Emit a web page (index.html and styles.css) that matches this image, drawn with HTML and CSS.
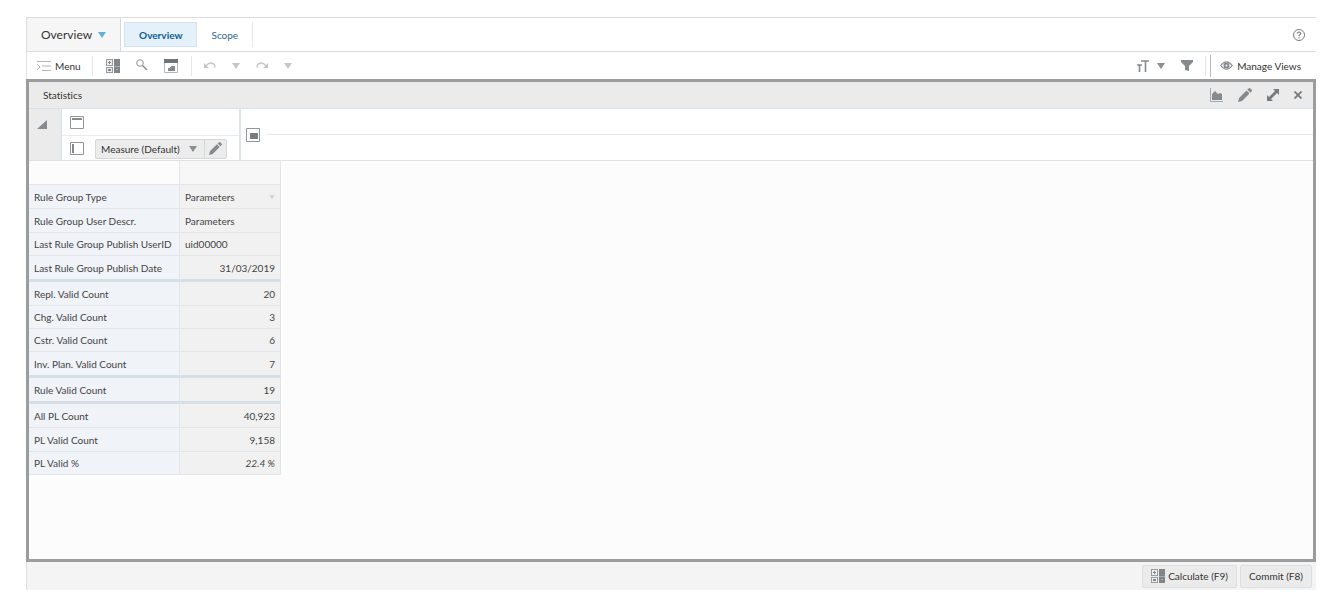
FILE: index.html
```html
<!DOCTYPE html>
<html lang="en">
<head>
<meta charset="utf-8">
<title>Overview</title>
<link rel="stylesheet" href="styles.css">
</head>
<body>
<svg class="defs" aria-hidden="true">
  <symbol id="calc" viewBox="0 0 14 14"><path fill="#969b9f" d="M0 0h7v7H0zM0 8h7v6H0z"/><path fill="#eee" d="M1 1h5v5H1zM1 9h5v4H1z"/><path fill="#7f8589" d="M3 2h1v1h1v1H4v1H3V4H2V3h1zM2 10h3v2H2zM8 0h6v14H8z"/><path fill="#a9adb0" d="M8 7h6v1H8zM10 10h2v1h-2z"/></symbol>
  <symbol id="pencil" viewBox="0 0 14 14"><path fill="#858a8e" d="M0 14l1-4 7.500-7.500 3 3L4 13zM9.300 1.700L10.500.5q1-1 2 0l1 1q1 1 0 2l-1.200 1.200z"/></symbol>
  <symbol id="down" viewBox="0 0 8 6"><path fill="currentColor" d="M0 0h8L4 6z"/></symbol>
  <symbol id="undo" viewBox="0 0 12 8"><path fill="none" stroke="currentColor" stroke-width="1.500" d="M2 3.500q4-3.500 7-2 2 1 2 4"/><path fill="currentColor" d="M0 1v5h5z"/></symbol>
</svg>
<main class="app">
  <header class="tabs">
    <button class="workbook">Overview <svg class="caret"><use href="#down"/></svg></button>
    <nav class="tablist"><a class="tab active" href="#overview">Overview</a><a class="tab" href="#scope">Scope</a></nav>
    <button class="help" aria-label="Help"><svg width="12" height="12" viewBox="0 0 12 12" fill="none" stroke="#777b7f"><circle cx="6" cy="6" r="5.500"/><path stroke-width="1.200" d="M4.300 4.700Q4.400 3 6 3t1.700 1.500Q7.600 5.500 6 6.200v1M6 8.200v1.200"/></svg></button>
  </header>
  <div class="toolbar">
    <button class="menu"><svg width="14" height="12" viewBox="0 0 14 12" fill="none" stroke="#b3b7ba"><path d="M0 1.500h14M5 6h9M5 10.500h9M0 4l3 3-3 3"/></svg>Menu</button>
    <div class="group tools">
      <button aria-label="Calculate"><svg width="14" height="14"><use href="#calc"/></svg></button>
      <button class="find" aria-label="Find"><svg width="12" height="12" viewBox="0 0 12 12" fill="none" stroke="#8c9195"><circle cx="4" cy="4" r="3.300"/><path stroke-width="1.600" d="M6.500 6.500l4.500 4.500"/></svg></button>
      <button aria-label="Window"><svg width="14" height="14" viewBox="0 0 14 14"><path fill="#fff" stroke="#b3b6b9" d="M.5.5h13v13H.5z"/><path fill="#6f7478" d="M0 0h14v4H0z"/><path fill="#858a8e" d="M4 12V9h2V8h1V7h4v5z"/></svg></button>
    </div>
    <div class="group history">
      <button aria-label="Undo"><svg width="12" height="8"><use href="#undo"/></svg></button>
      <button aria-label="Undo list"><svg class="caret"><use href="#down"/></svg></button>
      <button aria-label="Redo"><svg class="flip" width="12" height="8"><use href="#undo"/></svg></button>
      <button aria-label="Redo list"><svg class="caret"><use href="#down"/></svg></button>
    </div>
    <div class="right">
      <button class="text-size" aria-label="Text size"><svg width="12" height="12" viewBox="0 0 12 12" fill="none" stroke="#858a8e" stroke-width="1.600"><path d="M4 1h8M8.500 1v11M0 5h5M2.500 5v7"/></svg><svg class="caret"><use href="#down"/></svg></button>
      <button aria-label="Filter"><svg width="12" height="11" viewBox="0 0 12 11"><path fill="#858a8e" d="M0 0h12v2L8 6v5l-4-1V6L0 2z"/></svg></button>
      <div class="group manage"><button class="views"><svg width="13" height="9" viewBox="0 0 13 9" fill="none" stroke="#858a8e" stroke-width="1.200"><path d="M.7 4.500Q6.500-3 12.300 4.500 6.500 12 .7 4.500z"/><circle cx="6.500" cy="4.500" r="2" stroke-width="2"/></svg>Manage Views</button></div>
    </div>
  </div>
  <section class="panel">
    <header class="panel-head">
      <h1>Statistics</h1>
      <button aria-label="Chart"><svg width="13" height="14" viewBox="0 0 13 14"><path fill="none" stroke="#a3a8ac" d="M.5 0v13.500H13"/><path fill="#858a8e" d="M2 12V6l3-3 3 3 2-1 2 1v6z"/></svg></button>
      <button aria-label="Edit"><svg width="14" height="14"><use href="#pencil"/></svg></button>
      <button aria-label="Maximize"><svg width="12" height="12" viewBox="0 0 12 12"><path fill="#777c80" d="M6 0h6v6l-2-2-6 6 2 2H0V6l2 2 6-6z"/></svg></button>
      <button aria-label="Close"><svg width="8" height="8" viewBox="0 0 8 8"><path stroke="#74797d" stroke-width="1.800" d="M.5.5l7 7m0-7l-7 7"/></svg></button>
    </header>
    <div class="axes">
      <button class="corner" aria-label="Collapse"><svg width="10" height="9" viewBox="0 0 10 9"><path fill="#858a8e" d="M10 0v9H0z"/></svg></button>
      <div class="edges">
        <div class="edge"><svg width="14" height="13" viewBox="0 0 14 13"><path fill="#fff" stroke="#92979b" d="M.5.5h13v12H.5z"/><path fill="#858a8e" d="M2 2h10v2H2z"/></svg></div>
        <div class="edge"><svg width="14" height="13" viewBox="0 0 14 13"><path fill="#fff" stroke="#92979b" d="M.5.5h13v12H.5z"/><path fill="#858a8e" d="M2 2h2v9H2z"/></svg>
          <div class="measure"><button class="pick">Measure (Default)<svg class="caret"><use href="#down"/></svg></button><button class="edit" aria-label="Edit measure"><svg width="13" height="13"><use href="#pencil"/></svg></button></div>
        </div>
      </div>
      <div class="pages"><svg width="14" height="14" viewBox="0 0 14 14"><path fill="#fff" stroke="#92979b" d="M.5.5h13v13H.5z"/><path fill="#777c80" d="M4 5h8v6H4z"/></svg><span class="rule"></span></div>
    </div>
    <div class="grid-area">
      <table>
        <thead><tr><td></td><td></td></tr></thead>
        <tbody class="roomy">
          <tr><th scope="row">Rule Group Type</th><td><div class="choice">Parameters<svg class="caret"><use href="#down"/></svg></div></td></tr>
          <tr><th scope="row">Rule Group User Descr.</th><td>Parameters</td></tr>
          <tr><th scope="row">Last Rule Group Publish UserID</th><td>uid00000</td></tr>
          <tr><th scope="row">Last Rule Group Publish Date</th><td class="num">31/03/2019</td></tr>
        </tbody>
        <tbody>
          <tr><th scope="row">Repl. Valid Count</th><td class="num">20</td></tr>
          <tr><th scope="row">Chg. Valid Count</th><td class="num">3</td></tr>
          <tr><th scope="row">Cstr. Valid Count</th><td class="num">6</td></tr>
          <tr><th scope="row">Inv. Plan. Valid Count</th><td class="num">7</td></tr>
        </tbody>
        <tbody>
          <tr><th scope="row">Rule Valid Count</th><td class="num">19</td></tr>
        </tbody>
        <tbody class="roomy">
          <tr><th scope="row">All PL Count</th><td class="num">40,923</td></tr>
          <tr><th scope="row">PL Valid Count</th><td class="num">9,158</td></tr>
          <tr><th scope="row">PL Valid %</th><td class="num percent">22.4 %</td></tr>
        </tbody>
      </table>
    </div>
  </section>
  <footer class="actions">
    <button><svg width="14" height="14"><use href="#calc"/></svg>Calculate (F9)</button>
    <button>Commit (F8)</button>
  </footer>
</main>
</body>
</html>
```
FILE: styles.css
```css
* { box-sizing: border-box; }
body { margin: 0; background: #fff; color: #333; font: 10px/14px Lato, "Open Sans", sans-serif; font-variant-ligatures: none; }
button { display: flex; align-items: center; margin: 0; padding: 0; border: 0; background: none; color: inherit; font: inherit; font-variant-ligatures: none; white-space: nowrap; }
svg { display: block; flex: none; }
.defs { position: absolute; width: 0; height: 0; }
.caret { width: 8px; height: 6px; color: #8a8f93; }
.app { display: flex; flex-direction: column; min-height: 100vh; padding: 17px 7px 10px 26px; }

.tabs { display: flex; align-items: center; height: 35px; border: solid #d9dde0; border-width: 1px 0 1px 1px; }
.workbook { align-self: stretch; gap: 6px; padding: 0 14px; border-right: 1px solid #d5dadd; background: #f6f6f6; font-size: 12px; }
.workbook .caret { color: #62b0d5; }
.tablist { display: flex; padding-left: 3px; }
.tab { display: flex; align-items: center; justify-content: center; height: 25px; padding: 0 14px; border-right: 1px solid #e3e7ea; color: #2b6592; text-decoration: none; }
.tab.active { border: 1px solid #d2e4ef; background: #e4f1fa; color: #0b5c95; font-weight: 700; }
.help { margin-left: auto; padding-right: 11px; }

.toolbar { display: flex; align-items: center; height: 27px; border-left: 1px solid #e0e3e5; }
.menu { gap: 4px; padding: 0 11px 0 10px; }
.group { display: flex; align-items: center; height: 20px; border-left: 1px solid #e5e7e8; }
.tools { gap: 16px; padding: 0 13px; }
.find { padding-bottom: 2px; }
.history { gap: 16px; padding-left: 12px; color: #c3c7ca; }
.history .caret { color: #c3c7ca; }
.flip { transform: scaleX(-1); }
.right { display: flex; align-items: center; gap: 16px; margin-left: auto; padding-right: 15px; }
.text-size { gap: 8px; }
.manage { margin-left: -4px; padding-left: 4px; }
.views { gap: 4px; height: 22px; padding-left: 9px; border-left: 1px solid #b6babd; }

.panel { display: flex; flex: 1; flex-direction: column; border: 3px solid #9a9c9e; background: #fcfcfc; }
.panel-head { display: flex; align-items: center; gap: 15px; height: 27px; padding-right: 11px; border-bottom: 1px solid #d9e2e8; background: #ebebeb; }
h1 { margin: 0 auto 0 14px; font: inherit; font-variant-ligatures: none; }
.axes { display: flex; height: 52px; border-bottom: 1px solid #dde2e5; background: #fff; }
.corner { align-items: flex-start; width: 33px; padding: 11px 0 0 8px; border-right: 1px solid #d6e2ea; background: #ebebeb; }
.edges { width: 179px; border-right: 2px solid #dce5ea; }
.edge { display: flex; align-items: center; gap: 11px; height: 26px; padding-left: 8px; }
.edge + .edge { border-top: 1px solid #e8ecef; }
.measure { display: flex; height: 20px; border: 1px solid #d4d6d8; border-radius: 2px; background: #ececec; }
.pick { gap: 9px; padding: 0 7px 0 5px; }
.edit { width: 22px; justify-content: center; border-left: 1px solid #d4d6d8; }
.pages { display: flex; flex: 1; align-items: center; gap: 6px; padding-left: 5px; }
.rule { flex: 1; height: 1px; background: #e8ebed; }

table { table-layout: fixed; width: 252px; border-spacing: 0; font-size: 10px; color: #444; }
th, td { width: 101px; height: 23px; padding: 0 5px; border: solid #e3e5e7; border-width: 0 1px 1px 0; background: #f1f1f1; font-weight: 400; text-align: left; white-space: nowrap; line-height: 14px; }
th, thead td:first-child { width: 151px; background: #f0f3f8; }
thead td, tbody tr:first-child > *, .roomy tr:nth-child(2) > * { height: 24px; }
thead td { background: #f7f7f7; }
thead td:first-child { background: #fcfcfc; }
tbody:not(:last-child) tr:last-child > * { height: 26px; border-bottom: 3px solid #d6dfe5; }
tbody:nth-of-type(3) tr > * { height: 27px; }
.choice { display: flex; align-items: center; justify-content: space-between; }
.choice .caret { width: 6px; height: 4px; color: #d0d2d4; }
td.num { text-align: right; }
.percent { font-style: italic; }

.actions { display: flex; align-items: center; justify-content: flex-end; gap: 3px; height: 28px; padding-right: 4px; border-left: 1px solid #dedede; background: #f4f4f4; }
.actions button { gap: 3px; height: 23px; padding: 0 8px; border: 1px solid #dcdedf; border-radius: 2px; background: #ebebeb; }
```
